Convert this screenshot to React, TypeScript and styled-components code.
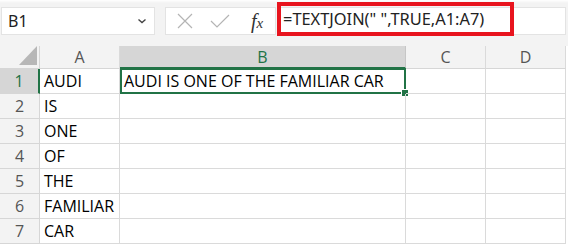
import React from "react";
import styled, { createGlobalStyle } from "styled-components";

const GlobalStyle = createGlobalStyle`
  html, body {
    margin: 0;
    padding: 0;
    background: #ffffff;
  }
  body {
    font-family: "Open Sans", "Noto Sans", sans-serif;
  }
`;

const columns = ["A", "B", "C", "D"];
const widths = [80, 286, 80, 80];
const words = ["AUDI", "IS", "ONE", "OF", "THE", "FAMILIAR", "CAR"];

export default function App() {
  return (
    <Page>
      <GlobalStyle />
      <FormulaBar>
        <NameBox>
          <NameText>B1</NameText>
          <svg width="10" height="6" viewBox="0 0 10 6">
            <path d="M1.5 1.5 L5 4.5 L8.5 1.5" fill="none" stroke="#444" strokeWidth="1.4" />
          </svg>
        </NameBox>
        <IconBox>
          <svg width="16" height="16" viewBox="0 0 16 16">
            <path d="M1 1 L15 15 M15 1 L1 15" stroke="#b4b4b4" strokeWidth="1.2" />
          </svg>
          <svg width="20" height="16" viewBox="0 0 20 16">
            <path d="M1 8 L7 14 L19 2" fill="none" stroke="#b4b4b4" strokeWidth="1.2" />
          </svg>
          <Fx>
            f<sub>x</sub>
          </Fx>
        </IconBox>
        <FormulaBox>
          <Highlight>=TEXTJOIN(" ",TRUE,A1:A7)</Highlight>
        </FormulaBox>
      </FormulaBar>
      <Sheet>
        <Corner>
          <svg width="18" height="19" viewBox="0 0 18 19">
            <path d="M18 0 L18 19 L0 19 Z" fill="#b7b7b7" />
          </svg>
        </Corner>
        {columns.map((c, i) => (
          <ColHeader key={c} $active={c === "B"} style={{ width: widths[i] }}>
            {c}
          </ColHeader>
        ))}
        {words.map((w, r) => (
          <React.Fragment key={w}>
            <RowHeader $active={r === 0}>{r + 1}</RowHeader>
            <Cell>{w}</Cell>
            <Cell>
              {r === 0 && (
                <Selection>
                  AUDI IS ONE OF THE FAMILIAR CAR
                  <Handle />
                </Selection>
              )}
            </Cell>
            <Cell />
            <Cell />
          </React.Fragment>
        ))}
      </Sheet>
    </Page>
  );
}

const Page = styled.div`
  width: 568px;
  height: 246px;
  overflow: hidden;
  background: #ffffff;
`;

const FormulaBar = styled.div`
  height: 46px;
  box-sizing: border-box;
  background: linear-gradient(#ffffff 0px, #f3f3f3 3px);
  display: flex;
  align-items: flex-start;
  padding: 7px 2px 0 1px;
`;

const NameBox = styled.div`
  width: 154px;
  height: 28px;
  box-sizing: border-box;
  background: #ffffff;
  border: 1px solid #e3e3e3;
  display: flex;
  align-items: center;
  justify-content: space-between;
  padding: 0 7px 0 6px;
`;

const NameText = styled.span`
  font-family: "Noto Sans", sans-serif;
  font-size: 16px;
  color: #222;
`;

const IconBox = styled.div`
  margin-left: 10px;
  width: 111px;
  height: 28px;
  box-sizing: border-box;
  background: #ffffff;
  border: 1px solid #e3e3e3;
  display: flex;
  align-items: center;
  padding-left: 11px;
  gap: 17px;
`;

const Fx = styled.span`
  font-family: "Liberation Serif", serif;
  font-style: italic;
  font-size: 20px;
  color: #333;
  margin-left: 4px;
  sub {
    font-size: 15px;
    vertical-align: 0;
  }
`;

const FormulaBox = styled.div`
  flex: 1;
  height: 28px;
  box-sizing: border-box;
  background: #ffffff;
  border: 1px solid #e3e3e3;
  margin-left: 1px;
`;

const Highlight = styled.div`
  margin-top: -6px;
  margin-left: -1px;
  width: 237px;
  height: 34px;
  box-sizing: border-box;
  border: 4px solid #e8141e;
  padding-left: 2px;
  font-family: "Noto Sans", sans-serif;
  font-size: 16.4px;
  line-height: 25px;
  color: #222;
  white-space: nowrap;
`;

const Sheet = styled.div`
  display: grid;
  grid-template-columns: 40px 80px 286px 80px 80px;
  grid-template-rows: 23px repeat(7, 25px);
`;

const Corner = styled.div`
  background: #f3f3f3;
  border-right: 1px solid #d6d6d6;
  border-bottom: 1px solid #d6d6d6;
  box-sizing: border-box;
  display: flex;
  align-items: flex-end;
  justify-content: flex-end;
  padding: 0 2px 3px 0;
`;

const ColHeader = styled.div<{ $active?: boolean }>`
  box-sizing: border-box;
  background: ${(p) => (p.$active ? "#d6d6d6" : "#f3f3f3")};
  border-right: 1px solid ${(p) => (p.$active ? "#c6c6c6" : "#dadada")};
  border-bottom: ${(p) => (p.$active ? "2px solid #217346" : "1px solid #d6d6d6")};
  color: ${(p) => (p.$active ? "#217346" : "#555")};
  font-size: 16px;
  display: flex;
  align-items: center;
  justify-content: center;
`;

const RowHeader = styled.div<{ $active?: boolean }>`
  box-sizing: border-box;
  background: ${(p) => (p.$active ? "#d6d6d6" : "#f3f3f3")};
  border-right: ${(p) => (p.$active ? "2px solid #217346" : "1px solid #d6d6d6")};
  border-bottom: 1px solid #d6d6d6;
  color: ${(p) => (p.$active ? "#217346" : "#555")};
  font-size: 16px;
  display: flex;
  align-items: center;
  justify-content: center;
`;

const Cell = styled.div`
  position: relative;
  box-sizing: border-box;
  border-right: 1px solid #dadada;
  border-bottom: 1px solid #dadada;
  padding-left: 4px;
  font-size: 16px;
  line-height: 24px;
  color: #000;
  white-space: nowrap;
`;

const Selection = styled.div`
  position: absolute;
  left: 0;
  top: -1px;
  right: -1px;
  bottom: -1px;
  border: 2px solid #217346;
  padding-left: 2px;
  line-height: 22px;
`;

const Handle = styled.div`
  position: absolute;
  right: -5px;
  bottom: -5px;
  width: 6px;
  height: 6px;
  background: #217346;
  border: 1px solid #ffffff;
`;
